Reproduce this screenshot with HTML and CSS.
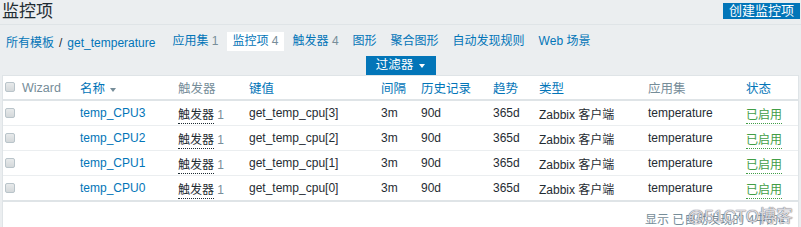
FILE: index.html
```html
<!DOCTYPE html>
<html>
<head>
<meta charset="utf-8">
<link rel="stylesheet" href="styles.css">
</head>
<body>
<header class="top">
  <h1 class="title">监控项</h1>
  <button class="btn">创建监控项</button>
</header>
<nav class="nav">
  <span class="crumbs"><a>所有模板</a><span class="sep">/</span><a>get_temperature</a></span>
  <span class="tab"><a>应用集</a> <span class="cnt">1</span></span>
  <span class="tab active"><a>监控项</a> <span class="cnt">4</span></span>
  <span class="tab"><a>触发器</a> <span class="cnt">4</span></span>
  <span class="tab"><a>图形</a></span>
  <span class="tab"><a>聚合图形</a></span>
  <span class="tab"><a>自动发现规则</a></span>
  <span class="tab"><a>Web 场景</a></span>
</nav>
<div class="filter-row"><span class="filter">过滤器 <span class="caret"></span></span></div>
<div class="panel">
  <table class="list">
    <thead>
      <tr>
        <th class="c-cb"><span class="cb"></span></th>
        <th class="c-wiz grey">Wizard</th>
        <th class="c-name"><a>名称</a> <span class="sort"></span></th>
        <th class="c-trig grey">触发器</th>
        <th class="c-key"><a>键值</a></th>
        <th class="c-int"><a>间隔</a></th>
        <th class="c-hist"><a>历史记录</a></th>
        <th class="c-trend"><a>趋势</a></th>
        <th class="c-type"><a>类型</a></th>
        <th class="c-app grey">应用集</th>
        <th class="c-stat"><a>状态</a></th>
      </tr>
    </thead>
    <tbody>
      <tr>
        <td><span class="cb"></span></td><td></td>
        <td><a>temp_CPU3</a></td>
        <td><span class="dot">触发器</span> <span class="cnt">1</span></td>
        <td>get_temp_cpu[3]</td><td>3m</td><td>90d</td><td>365d</td>
        <td>Zabbix 客户端</td><td>temperature</td><td><span class="ok">已启用</span></td>
      </tr>
      <tr>
        <td><span class="cb"></span></td><td></td>
        <td><a>temp_CPU2</a></td>
        <td><span class="dot">触发器</span> <span class="cnt">1</span></td>
        <td>get_temp_cpu[2]</td><td>3m</td><td>90d</td><td>365d</td>
        <td>Zabbix 客户端</td><td>temperature</td><td><span class="ok">已启用</span></td>
      </tr>
      <tr>
        <td><span class="cb"></span></td><td></td>
        <td><a>temp_CPU1</a></td>
        <td><span class="dot">触发器</span> <span class="cnt">1</span></td>
        <td>get_temp_cpu[1]</td><td>3m</td><td>90d</td><td>365d</td>
        <td>Zabbix 客户端</td><td>temperature</td><td><span class="ok">已启用</span></td>
      </tr>
      <tr>
        <td><span class="cb"></span></td><td></td>
        <td><a>temp_CPU0</a></td>
        <td><span class="dot">触发器</span> <span class="cnt">1</span></td>
        <td>get_temp_cpu[0]</td><td>3m</td><td>90d</td><td>365d</td>
        <td>Zabbix 客户端</td><td>temperature</td><td><span class="ok">已启用</span></td>
      </tr>
    </tbody>
  </table>
  <div class="footer">显示 已自动发现的 4中的4<span class="wm">@51CTO博客</span></div>
</div>
</body>
</html>
```
FILE: styles.css
```css
html, body {
  margin: 0;
  padding: 0;
}
body {
  background: #ebeef0;
  font-family: "Liberation Sans", Arial, "Noto Sans CJK SC", sans-serif;
  font-size: 12px;
  color: #1f2c33;
  width: 801px;
  height: 227px;
  overflow: hidden;
}
a {
  color: #0275b8;
  text-decoration: none;
}
.top {
  display: flex;
  justify-content: space-between;
  align-items: flex-start;
  height: 24px;
  border-bottom: 1px solid #dfe4e7;
  box-sizing: content-box;
}
.title {
  margin: 0;
  padding: 0 0 0 2px;
  font-size: 17px;
  font-weight: normal;
  line-height: 24px;
  color: #1f2c33;
}
.btn {
  margin: 3px 1px 0 0;
  height: 16px;
  width: 77px;
  padding: 0;
  border: 0;
  background: #0275b8;
  color: #fff;
  font-family: inherit;
  font-size: 13px;
  line-height: 16px;
  text-align: center;
}
.nav {
  display: flex;
  align-items: center;
  margin-top: 7px;
  height: 19px;
  padding-left: 6px;
  font-size: 12px;
}
.crumbs {
  margin-right: 12px;
}
.sep {
  color: #1f2c33;
  margin: 0 5px;
}
.tab {
  padding: 0 5px;
  height: 19px;
  line-height: 19px;
  margin-right: 4px;
}
.tab.active {
  background: #fff;
}
.cnt {
  color: #768d99;
}
.filter-row {
  display: flex;
  justify-content: center;
  margin-top: 5px;
}
.filter {
  background: #0275b8;
  color: #fff;
  width: 70px;
  height: 19px;
  line-height: 19px;
  text-align: center;
  font-size: 12.5px;
  display: inline-flex;
  align-items: center;
  justify-content: center;
  gap: 4px;
}
.caret {
  width: 0;
  height: 0;
  border-left: 3.5px solid transparent;
  border-right: 3.5px solid transparent;
  border-top: 4px solid #fff;
  margin-left: 2px;
}
.panel {
  margin: 0 2px;
  background: #fff;
  border: 1px solid #dfe4e7;
  border-bottom: 0;
  height: 152px;
}
.list {
  width: 100%;
  border-collapse: collapse;
  table-layout: fixed;
}
.list th, .list td {
  padding: 0;
  text-align: left;
  font-weight: normal;
  white-space: nowrap;
  height: 24px;
  border-bottom: 1px solid #ebeef0;
  font-size: 12px;
}
.list th {
  height: 23px;
  border-bottom: 2px solid #dfe4e7;
  font-size: 12.5px;
}
.list tbody tr:last-child td {
  border-bottom: 2px solid #dfe4e7;
}
.grey {
  color: #768d99;
}
.c-cb { width: 17px; }
.c-wiz { width: 58px; }
.c-name { width: 98px; }
.c-trig { width: 71px; }
.c-key { width: 132px; }
.c-int { width: 40px; }
.c-hist { width: 72px; }
.c-trend { width: 46px; }
.c-type { width: 109px; }
.c-app { width: 98px; }
.list th:first-child, .list td:first-child {
  padding-left: 2px;
}
.cb {
  display: inline-block;
  width: 8px;
  height: 8px;
  border: 1px solid #b9c4ca;
  border-radius: 2px;
  background: linear-gradient(#e8eaeb, #d4d8da);
  vertical-align: middle;
  margin-top: -2px;
}
.sort {
  display: inline-block;
  width: 0;
  height: 0;
  border-left: 3px solid transparent;
  border-right: 3px solid transparent;
  border-top: 4px solid #768d99;
  vertical-align: middle;
  margin-left: 1px;
}
.dot {
  border-bottom: 1px dotted #1f2c33;
  padding-bottom: 1px;
}
.ok {
  color: #429e47;
  border-bottom: 1px dotted #429e47;
  padding-bottom: 1px;
}
.footer {
  position: relative;
  text-align: right;
  padding-right: 13px;
  padding-top: 8px;
  color: #768d99;
  font-size: 12px;
}
.wm {
  position: absolute;
  right: 5px;
  top: 0;
  font-size: 17px;
  color: rgba(255, 255, 255, 0.75);
  text-shadow: 0 0 1px #667, 0 0 1px #667;
  pointer-events: none;
}
```
